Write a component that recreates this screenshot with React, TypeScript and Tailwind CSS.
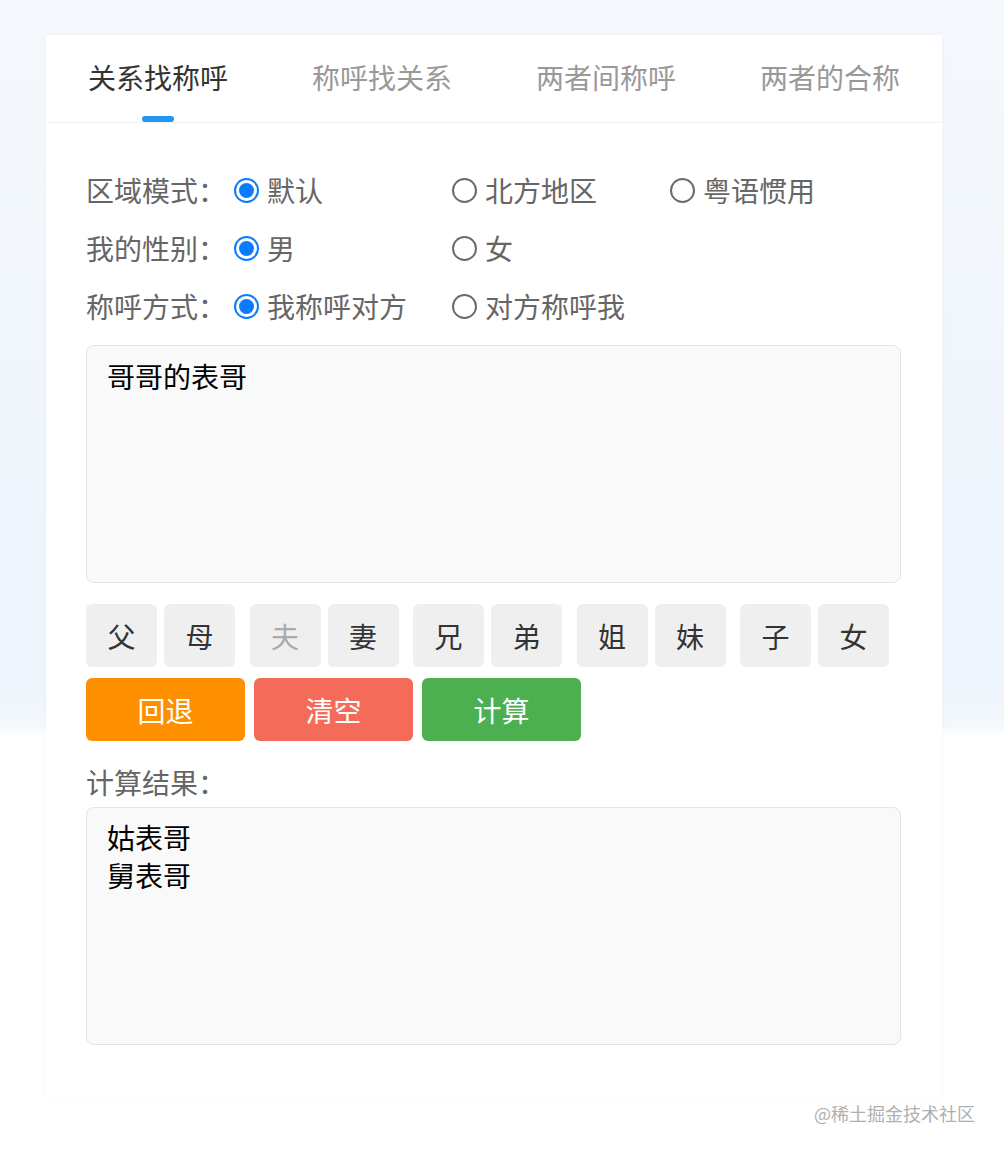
import { useState } from "react";

const TABS = ["关系找称呼", "称呼找关系", "两者间称呼", "两者的合称"];

const KEY_PAIRS: [string, string][] = [
    ["父", "母"],
    ["夫", "妻"],
    ["兄", "弟"],
    ["姐", "妹"],
    ["子", "女"],
];

type RadioRowProps = {
    label: string;
    options: string[];
    value: number;
    onChange: (i: number) => void;
};

const RadioRow = ({ label, options, value, onChange }: RadioRowProps) => (
    <div className="flex items-center h-[58px]">
        <span className="w-[148px] text-[#666] text-[28px] leading-[38px]">{label}</span>
        {options.map((opt, i) => (
            <label
                key={opt}
                className="w-[218px] flex items-center gap-[8px] cursor-pointer"
                onClick={() => onChange(i)}
            >
                {value === i ? (
                    <span className="w-[25px] h-[25px] rounded-full border-[2px] border-[#0a7bff] flex items-center justify-center">
                        <span className="w-[15px] h-[15px] rounded-full bg-[#0a7bff]" />
                    </span>
                ) : (
                    <span className="w-[25px] h-[25px] rounded-full border-[2px] border-[#6b6b6b]" />
                )}
                <span className="text-[#666] text-[28px] leading-[38px]">{opt}</span>
            </label>
        ))}
    </div>
);

const App = () => {
    const [tab, setTab] = useState(0);
    const [region, setRegion] = useState(0);
    const [gender, setGender] = useState(0);
    const [mode, setMode] = useState(0);
    const [input, setInput] = useState("哥哥的表哥");
    const [result, setResult] = useState("姑表哥\n舅表哥");

    return (
        <div className="min-h-[1152px] w-full pt-[35px] font-['Microsoft_YaHei','Noto_Sans_CJK_SC',sans-serif] bg-[linear-gradient(180deg,#f5f8fc_0%,#f0f6fc_35%,#eef5fc_60%,#f4f8fd_63%,#ffffff_64%)]">
            <div className="ml-[46px] w-[896px] bg-white shadow-[0_0_6px_rgba(0,0,0,0.03)]">
                {/* tabs */}
                <div className="flex border-b border-[#f0f0f0]">
                    {TABS.map((t, i) => (
                        <button
                            key={t}
                            onClick={() => setTab(i)}
                            className="flex-1 flex flex-col items-center pt-[22px]"
                        >
                            <span className={`text-[28px] leading-[40px] ${tab === i ? "text-[#333]" : "text-[#999]"}`}>
                                {t}
                            </span>
                            <span className={`mt-[19px] w-[32px] h-[6px] rounded-full ${tab === i ? "bg-[#2196f3]" : "bg-transparent"}`} />
                        </button>
                    ))}
                </div>

                <div className="px-[40px] pt-[38px] pb-[53px]">
                    <RadioRow label="区域模式：" options={["默认", "北方地区", "粤语惯用"]} value={region} onChange={setRegion} />
                    <RadioRow label="我的性别：" options={["男", "女"]} value={gender} onChange={setGender} />
                    <RadioRow label="称呼方式：" options={["我称呼对方", "对方称呼我"]} value={mode} onChange={setMode} />

                    <textarea
                        value={input}
                        onChange={(e) => setInput(e.target.value)}
                        className="mt-[10px] block w-[815px] h-[238px] resize-none rounded-[8px] border border-[#e4e4e4] bg-[#f9f9f9] px-[20px] py-[11px] text-[28px] leading-[38px] text-black outline-none"
                    />

                    {/* keyboard */}
                    <div className="mt-[21px] flex gap-[14.5px]">
                        {KEY_PAIRS.map((pair) => (
                            <div key={pair[0]} className="flex gap-[7px]">
                                {pair.map((k) => (
                                    <button
                                        key={k}
                                        disabled={k === "夫"}
                                        onClick={() => setInput(input + "的" + k)}
                                        className={`w-[71px] h-[63px] rounded-[6px] bg-[#efefef] text-[28px] ${k === "夫" ? "text-[#aaa]" : "text-[#333]"}`}
                                    >
                                        {k}
                                    </button>
                                ))}
                            </div>
                        ))}
                    </div>

                    <div className="mt-[11px] flex gap-[9px]">
                        <button
                            onClick={() => setInput(input.slice(0, -1))}
                            className="w-[159px] h-[63px] rounded-[6px] bg-[#fe9000] text-white text-[28px]"
                        >
                            回退
                        </button>
                        <button
                            onClick={() => { setInput(""); setResult(""); }}
                            className="w-[159px] h-[63px] rounded-[6px] bg-[#f46b5a] text-white text-[28px]"
                        >
                            清空
                        </button>
                        <button
                            onClick={() => setResult("姑表哥\n舅表哥")}
                            className="w-[159px] h-[63px] rounded-[6px] bg-[#4caf50] text-white text-[28px]"
                        >
                            计算
                        </button>
                    </div>

                    <p className="mt-[22px] text-[#666] text-[28px] leading-[38px]">计算结果：</p>
                    <textarea
                        readOnly
                        value={result}
                        className="mt-[6px] block w-[815px] h-[238px] resize-none rounded-[8px] border border-[#e4e4e4] bg-[#f9f9f9] px-[20px] py-[10px] text-[28px] leading-[38px] text-black outline-none"
                    />
                </div>
            </div>

            <p className="w-[975px] text-right mt-[2px] text-[18px] leading-[26px] text-[#b0b0b0]">@稀土掘金技术社区</p>
        </div>
    );
};

export default App;
